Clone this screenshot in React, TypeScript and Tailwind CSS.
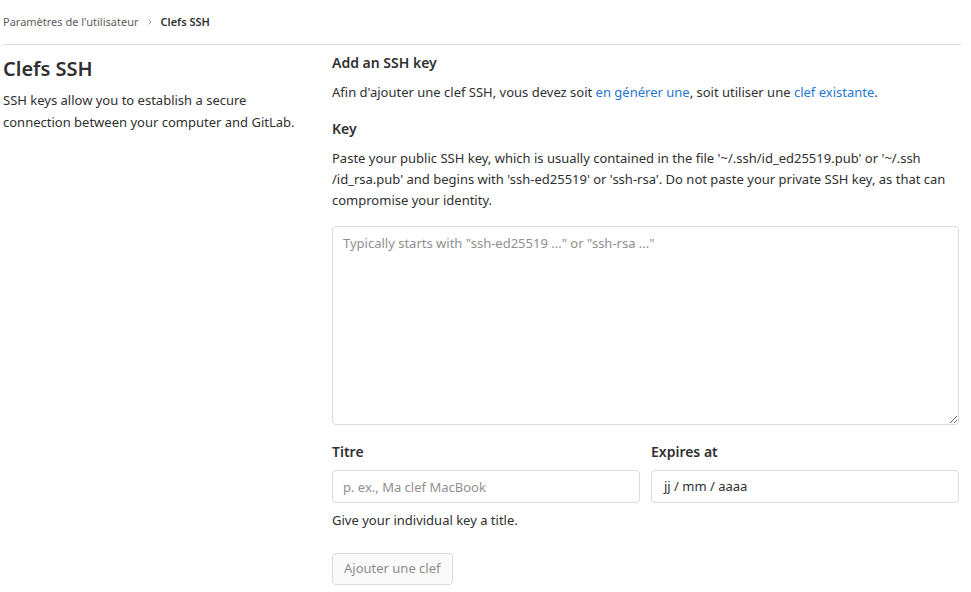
import React from 'react';

const font = "font-['Segoe_UI','Noto_Sans','Open_Sans',sans-serif]";

const App: React.FC = () => {
  return (
    <div className={`min-h-[592px] bg-white pl-[3px] pr-[10px] text-[#303030] ${font}`}>
      <nav className="flex h-[45px] items-center gap-[7px] border-b border-[#dbdbdb] text-[11px]">
        <span className="text-[#5c5c5c]">Paramètres de l'utilisateur</span>
        <svg width="8" height="8" viewBox="0 0 8 8" className="text-[#999]">
          <path d="M2.5 1.5 L5 4 L2.5 6.5" fill="none" stroke="currentColor" strokeWidth="1" />
        </svg>
        <span className="font-semibold text-[#303030]">Clefs SSH</span>
      </nav>

      <div className="flex">
        <div className="w-[329px] shrink-0 pr-[30px] pt-[10px]">
          <h2 className="text-[20px] font-semibold leading-[28px]">Clefs SSH</h2>
          <p className="mt-[6px] text-[13px] leading-[22px]">
            SSH keys allow you to establish a secure connection between your computer and GitLab.
          </p>
        </div>

        <div className="mr-[2px] flex-1 pt-[8px] text-[13px]">
          <h4 className="text-[14px] font-semibold leading-[20px]">Add an SSH key</h4>
          <p className="mt-[9px] leading-[20px]">
            Afin d'ajouter une clef SSH, vous devez soit{' '}
            <a className="text-[#1f78d1]">en générer une</a>, soit utiliser une{' '}
            <a className="text-[#1f78d1]">clef existante</a>.
          </p>

          <label className="mt-[17px] block text-[14px] font-semibold leading-[20px]">Key</label>
          <p className="mt-[9px] leading-[21px]">
            Paste your public SSH key, which is usually contained in the file '~/.ssh/id_ed25519.pub' or '~/.ssh
            /id_rsa.pub' and begins with 'ssh-ed25519' or 'ssh-rsa'. Do not paste your private SSH key, as that can
            compromise your identity.
          </p>

          <textarea
            className="mt-[15px] block h-[199px] w-full resize-y rounded-[4px] border border-[#dbdbdb] px-[10px] py-[6px] text-[13px] leading-[20px] placeholder:text-[#909090] focus:outline-none"
            placeholder={'Typically starts with "ssh-ed25519 ..." or "ssh-rsa ..."'}
          />

          <div className="mt-[17px] flex gap-[11px]">
            <div className="flex-1">
              <label className="block text-[14px] font-semibold leading-[20px]">Titre</label>
              <input
                className="mt-[8px] block h-[33px] w-full rounded-[4px] border border-[#dbdbdb] px-[10px] text-[13px] placeholder:text-[#909090] focus:outline-none"
                placeholder="p. ex., Ma clef MacBook"
              />
              <p className="mt-[7px] leading-[20px]">Give your individual key a title.</p>
            </div>
            <div className="flex-1">
              <label className="block text-[14px] font-semibold leading-[20px]">Expires at</label>
              <div className="mt-[8px] flex h-[33px] w-full items-center rounded-[4px] border border-[#dbdbdb] px-[12px] text-[13px] text-[#303030]">
                jj / mm / aaaa
              </div>
            </div>
          </div>

          <button className="mt-[23px] h-[32px] rounded-[4px] border border-[#dbdbdb] bg-[#fafafa] px-[11px] text-[13px] text-[#8c8c8c]">
            Ajouter une clef
          </button>
        </div>
      </div>
    </div>
  );
};

export default App;
